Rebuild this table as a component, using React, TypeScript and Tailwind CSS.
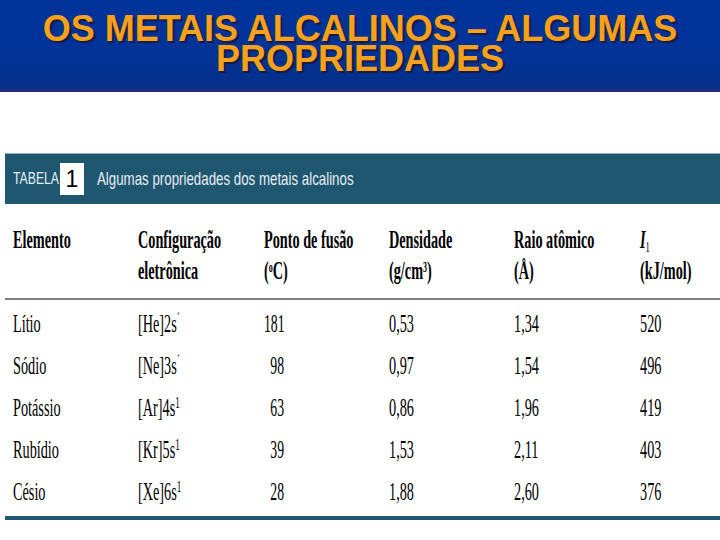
import React from 'react';

type Row = { nome: string; config: string; exp: string; fusao: string; dens: string; raio: string; ion: string };

const rows: Row[] = [
  { nome: 'Lítio', config: '[He]2s', exp: 'ˊ', fusao: '181', dens: '0,53', raio: '1,34', ion: '520' },
  { nome: 'Sódio', config: '[Ne]3s', exp: 'ˊ', fusao: '98', dens: '0,97', raio: '1,54', ion: '496' },
  { nome: 'Potássio', config: '[Ar]4s', exp: '1', fusao: '63', dens: '0,86', raio: '1,96', ion: '419' },
  { nome: 'Rubídio', config: '[Kr]5s', exp: '1', fusao: '39', dens: '1,53', raio: '2,11', ion: '403' },
  { nome: 'Césio', config: '[Xe]6s', exp: '1', fusao: '28', dens: '1,88', raio: '2,60', ion: '376' },
];

// texto da tabela vem "espremido" na horizontal, por isso o scale-x
const Cell: React.FC<{ children: React.ReactNode; bold?: boolean }> = ({ children, bold }) => (
  <span className={`inline-block origin-left scale-x-[0.57] whitespace-nowrap ${bold ? 'font-bold' : ''}`}>{children}</span>
);

export default function App() {
  return (
    <div className="w-[720px] h-[540px] bg-white overflow-hidden flex flex-col font-['Liberation_Serif',serif] text-black">
      {/* Cabeçalho do slide */}
      <header className="h-[92px] bg-gradient-to-b from-[#003399] via-[#003399] to-[#06308a] border-b-[3px] border-[#1c2f78] flex flex-col items-center pt-[14px]">
        <h1 className="font-['Liberation_Sans',Arial,sans-serif] font-bold text-[36px] leading-[30px] text-[#f6a11c] text-center [text-shadow:2px_2px_1px_#1a1a40]">
          OS METAIS ALCALINOS – ALGUMAS
          <br />
          PROPRIEDADES
        </h1>
      </header>

      <div className="mt-[61px] ml-[5px] flex flex-col">
        {/* Barra do título da tabela */}
        <div className="h-[51px] bg-[#1f5670] border-t border-[#8fb2c2] flex items-center font-['Liberation_Sans',Arial,sans-serif] text-[#e6eef2]">
          <span className="ml-[8px] w-[47px] inline-block origin-left scale-x-[0.72] text-[17px] whitespace-nowrap">TABELA</span>
          <span className="w-[24px] h-[32px] bg-white text-black text-[23px] leading-[32px] text-center">1</span>
          <span className="ml-[13px] inline-block origin-left scale-x-[0.7] text-[19px] whitespace-nowrap">Algumas propriedades dos metais alcalinos</span>
        </div>

        {/* Cabeçalho das colunas */}
        <div className="grid grid-cols-[125px_126px_125px_125px_126px_1fr] px-[8px] pt-[20px] pb-[12px] text-[25px] leading-[31px] border-b-2 border-[#7f7f7f]">
          <div><Cell bold>Elemento</Cell></div>
          <div className="flex flex-col">
            <Cell bold>Configuração</Cell>
            <Cell bold>eletrônica</Cell>
          </div>
          <div className="flex flex-col">
            <Cell bold>Ponto de fusão</Cell>
            <Cell bold>(<sup className="text-[14px]">o</sup>C)</Cell>
          </div>
          <div className="flex flex-col">
            <Cell bold>Densidade</Cell>
            <Cell bold>(g/cm<sup className="text-[14px]">3</sup>)</Cell>
          </div>
          <div className="flex flex-col">
            <Cell bold>Raio atômico</Cell>
            <Cell bold>(Å)</Cell>
          </div>
          <div className="flex flex-col">
            <Cell bold><i>I</i><sub className="text-[15px] font-normal">1</sub></Cell>
            <Cell bold>(kJ/mol)</Cell>
          </div>
        </div>

        {/* Linhas */}
        <div className="flex flex-col pt-[3px] pb-[3px] border-b-4 border-[#1f5670]">
          {rows.map(r => (
            <div key={r.nome} className="grid grid-cols-[125px_126px_125px_125px_126px_1fr] px-[8px] h-[42px] items-center text-[25px] leading-[30px]">
              <div><Cell>{r.nome}</Cell></div>
              <div><Cell>{r.config}<sup className="text-[16px]">{r.exp}</sup></Cell></div>
              <div className="w-[20px] flex justify-end">
                <span className="inline-block origin-right scale-x-[0.55] whitespace-nowrap">{r.fusao}</span>
              </div>
              <div><Cell>{r.dens}</Cell></div>
              <div><Cell>{r.raio}</Cell></div>
              <div><Cell>{r.ion}</Cell></div>
            </div>
          ))}
        </div>
      </div>
    </div>
  );
}
